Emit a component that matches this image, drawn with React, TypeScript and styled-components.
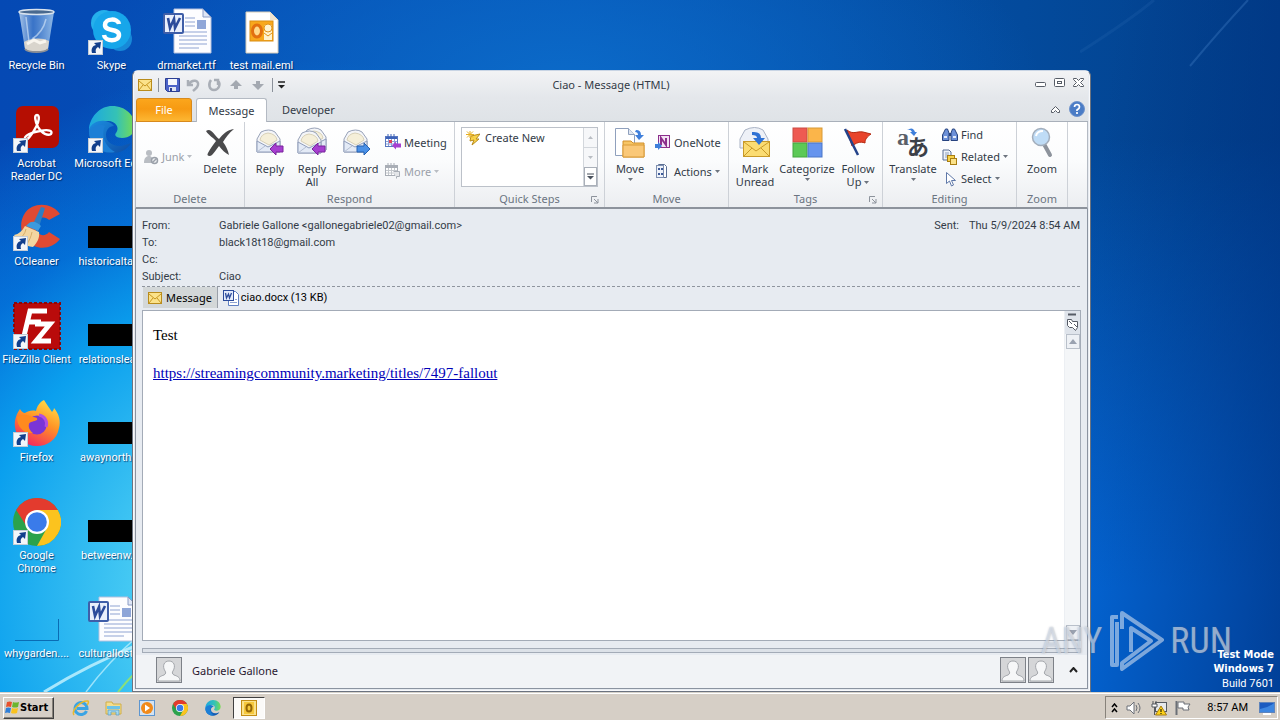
import React from "react";
import styled, { createGlobalStyle, css } from "styled-components";

const uiFont = 'Roboto, "DejaVu Sans Condensed", sans-serif';
const boldFont = '"DejaVu Sans Condensed", "DejaVu Sans", sans-serif';
const ribbonFont = '"Noto Sans", "Open Sans", sans-serif';

const GlobalStyle = createGlobalStyle`
  *, *::before, *::after { box-sizing: border-box; }
  body { margin: 0; font-family: ${uiFont}; font-size: 11px; line-height: 13px; overflow: hidden; }
  button { font: inherit; color: inherit; background: none; border: 0; padding: 0; margin: 0; }
  svg { display: block; flex: none; }
  p, dl, dd, h1, ul { margin: 0; padding: 0; }
`;

const Screen = styled.div`
  display: flex;
  flex-direction: column;
  height: 100vh;
`;

/* ---------- Desktop ---------- */

const Desktop = styled.main`
  position: relative;
  flex: 1;
  overflow: hidden;
  background:
    radial-gradient(ellipse 560px 540px at 300px 600px, #8be9fb 0%, #45c9f3 30%, #0ba0ee 58%, rgba(3, 130, 230, 0.6) 76%, rgba(2, 100, 208, 0) 100%),
    radial-gradient(ellipse 480px 200px at 560px 80px, rgba(12, 108, 202, 0.9) 0%, rgba(10, 100, 195, 0) 100%),
    linear-gradient(97deg, rgba(0, 50, 130, 0) 82%, rgba(0, 50, 130, 0.75) 100%),
    linear-gradient(180deg, rgba(4, 105, 218, 0) 0%, rgba(4, 105, 218, 0) 20%, rgba(4, 105, 218, 1) 85%),
    linear-gradient(90deg, #0549b4 0%, #0556b8 45%, #034a9c 80%, #02408a 100%);
`;

const Wallpaper = styled.svg`
  position: absolute;
  left: 0;
  bottom: 0;
`;

const TopGlow = styled.svg`
  position: absolute;
  right: 0;
  top: 0;
`;

const IconColumns = styled.div`
  position: relative;
  display: flex;
  margin-left: -1px;
`;

const IconColumn = styled.ul`
  width: 75px;
  list-style: none;
`;

const DesktopItem = styled.li`
  height: 98px;
  padding-top: 8px;
  display: flex;
  flex-direction: column;
  align-items: center;
  gap: 3px;
`;

const ItemLabel = styled.span`
  color: #fff;
  white-space: pre;
  text-align: center;
  text-shadow: 1px 1px 1px rgba(0, 30, 80, 0.7);
`;

const BuildInfo = styled.div`
  position: absolute;
  right: 6px;
  bottom: 0;
  color: #fff;
  text-align: right;
  line-height: 14px;
  strong, span { display: block; }
  strong { font-family: ${boldFont}; }
  span { line-height: 16px; }
`;

const Watermark = styled.div`
  position: absolute;
  right: 48px;
  bottom: 20px;
  display: flex;
  align-items: center;
  gap: 6px;
  color: rgba(225, 232, 242, 0.6);
  font: 400 36px/60px "Roboto Condensed", "Liberation Sans Narrow", Roboto, sans-serif;
  text-shadow: 0 0 2px rgba(90, 100, 120, 0.45);
`;

/* ---------- Message window ---------- */

const Window = styled.section`
  position: absolute;
  inset: 70px 189px 0 132px;
  display: flex;
  flex-direction: column;
  border: 1px solid #6b7380;
  border-top-color: #c8d4e4;
  border-radius: 6px 6px 0 0;
  background: #e7ebf1;
  padding: 0 2px 2px;
  box-shadow: inset 0 0 0 1px #f8f9fb;
  color: #333b47;
`;

const TitleBar = styled.header`
  display: grid;
  grid-template-columns: 1fr auto 1fr;
  align-items: center;
  height: 27px;
  padding: 0 4px 0 3px;
  background: linear-gradient(#f2f3f5, #e4e7eb);
  font-family: ${ribbonFont};
`;

const QuickAccess = styled.div`
  display: flex;
  align-items: center;
  gap: 6px;
`;

const QuickSeparator = styled.span<{ $tight?: boolean }>`
  width: 1px;
  height: 14px;
  background: #8b919a;
  margin-right: ${(p) => (p.$tight ? "-4px" : "0")};
`;

const WindowTitle = styled.h1`
  font-size: 11px;
  font-weight: 400;
  line-height: 16px;
`;

const WindowButtons = styled.div`
  display: flex;
  justify-content: flex-end;
  gap: 8px;
  padding-bottom: 4px;
`;

const TabStrip = styled.nav`
  display: flex;
  align-items: flex-end;
  height: 24px;
  border-bottom: 1px solid #a9b0ba;
  background: linear-gradient(#e4e7eb, #dfe3e7);
  font-family: ${ribbonFont};
  padding: 0 3px 0 1px;
`;

const RibbonTab = styled.button<{ $kind: "file" | "active" | "plain" }>`
  height: 23px;
  line-height: 22px;
  ${(p) =>
    p.$kind === "file" &&
    css`
      width: 56px;
      color: #fff;
      height: 24px;
      margin-bottom: -1px;
      border: 1px solid #d88a1c;
      border-radius: 3px 3px 0 0;
      background: linear-gradient(#fba61c, #f79a12 45%, #fdb733);
    `}
  ${(p) =>
    p.$kind === "active" &&
    css`
      width: 71px;
      height: 24px;
      margin: 0 0 -1px 4px;
      border: 1px solid #b4bac3;
      border-bottom: 0;
      border-radius: 3px 3px 0 0;
      background: #fff;
    `}
  ${(p) => p.$kind === "plain" && css`margin-left: 15px;`}
`;

const TabTools = styled.div`
  margin-left: auto;
  display: flex;
  align-items: center;
  gap: 9px;
  padding-bottom: 4px;
`;

const Ribbon = styled.div`
  display: flex;
  height: 87px;
  border-bottom: 2px solid #8d939c;
  border-left: 1px solid #b4bac3;
  border-right: 1px solid #b4bac3;
  background: linear-gradient(#ffffff, #fbfcfd 45%, #eceef1);
  font-family: ${ribbonFont};
`;

const RibbonGroup = styled.section<{ $width: number; $pad: number }>`
  display: flex;
  flex-direction: column;
  width: ${(p) => p.$width}px;
  border-right: 1px solid #cdd1d7;
  > div { padding-left: ${(p) => p.$pad}px; }
`;

const GroupBody = styled.div`
  display: flex;
  flex: 1;
`;

const GroupLabel = styled.footer`
  position: relative;
  height: 16px;
  line-height: 16px;
  text-align: center;
  color: #6b7481;
`;

const Launcher = styled.button`
  position: absolute;
  right: 5px;
  top: 5px;
`;

const BigButton = styled.button<{ $width: number }>`
  width: ${(p) => p.$width}px;
  padding-top: 5px;
  display: flex;
  flex-direction: column;
  align-items: center;
  gap: 3px;
`;

const BigLabel = styled.span`
  white-space: pre;
  text-align: center;
  svg { display: inline-block; vertical-align: 2px; margin-left: 3px; }
`;

const SmallColumn = styled.div<{ $indent?: number; $width?: number }>`
  display: flex;
  flex-direction: column;
  justify-content: center;
  margin-left: ${(p) => p.$indent || 0}px;
  ${(p) => p.$width && css`width: ${p.$width}px;`}
`;

const SmallButton = styled.button<{ $height: number }>`
  display: flex;
  align-items: center;
  gap: 3px;
  height: ${(p) => p.$height}px;
  &:disabled { color: #9aa0a9; }
`;

const Gallery = styled.div`
  display: flex;
  width: 137px;
  height: 60px;
  margin-top: 5px;
  border: 1px solid #bcc1c9;
  background: #fff;
`;

const GalleryItem = styled.button`
  display: flex;
  align-items: center;
  align-self: flex-start;
  flex: 1;
  gap: 5px;
  height: 19px;
  padding-left: 4px;
`;

const GalleryScroll = styled.div`
  display: grid;
  grid-template-rows: 1fr 1fr 1fr;
  width: 14px;
  border-left: 1px solid #d3d7dc;
  background: #f6f7f9;
`;

const GalleryStep = styled.button`
  display: grid;
  place-items: center;
  & + & { border-top: 1px solid #d3d7dc; }
  &:last-child { border: 1px solid #aab0b9; background: #fff; }
`;

/* ---------- Message header and body ---------- */

const MessagePane = styled.div`
  flex: 1;
  display: flex;
  flex-direction: column;
  border: solid #8b93a0;
  border-width: 0 1px 1px;
`;

const MessageHeader = styled.div`
  display: flex;
  justify-content: space-between;
  margin: 8px 7px 0 6px;
  height: 70px;
  border-bottom: 1px dashed #8f959e;
`;

const FieldList = styled.dl`
  display: grid;
  grid-template-columns: 77px auto;
  grid-auto-rows: 17px;
  line-height: 17px;
`;

const SentList = styled.dl`
  display: flex;
  gap: 10px;
  line-height: 17px;
`;

const AttachmentBar = styled.div`
  display: flex;
  height: 21px;
  margin: 0 7px 2px;
  color: #000;
`;

const AttachmentTab = styled.button<{ $active?: boolean }>`
  display: flex;
  align-items: center;
  gap: ${(p) => (p.$active ? 4 : 2)}px;
  padding: 0 5px;
  ${(p) =>
    p.$active &&
    css`
      font-family: ${ribbonFont};
      background: #d3d7d8;
      border-right: 1px solid #9aa0a9;
    `}
`;

const MessageFrame = styled.div`
  flex: 1;
  display: flex;
  margin: 0 6px;
  border: 1px solid #a3abb7;
  background: #fff;
`;

const MessageText = styled.article`
  flex: 1;
  padding: 15px 10px;
  font: 15px/19px "Liberation Serif", serif;
  color: #000;
  p + p { margin-top: 19px; }
  a { color: #0000b8; }
`;

const ScrollColumn = styled.div`
  display: flex;
  flex-direction: column;
  align-items: center;
  width: 16px;
  border-left: 1px solid #eceff3;
  background: #f4f6f8;
`;

const ScrollTools = styled.div`
  display: grid;
  place-items: center;
  width: 100%;
  height: 23px;
  background: #dfe4eb;
`;

const ScrollButton = styled.button<{ $end?: boolean }>`
  display: grid;
  place-items: center;
  width: 14px;
  height: 15px;
  border: 1px solid #b9c0ca;
  background: #eef1f5;
  ${(p) => p.$end && css`margin-top: auto;`}
`;

const Splitter = styled.div`
  height: 5px;
  margin: 7px 6px 2px;
  border: 1px solid #a3abb7;
  background: #dce1e8;
`;

const PeoplePane = styled.footer`
  display: flex;
  align-items: center;
  gap: 2px;
  height: 33px;
  padding: 0 9px 3px 20px;
  background: #f1f3f6;
  color: #2a1830;
`;

const PersonName = styled.span`
  margin: 0 auto 0 8px;
  font-family: ${ribbonFont};
`;

const Collapse = styled.button`
  margin-left: 13px;
`;

/* ---------- Taskbar ---------- */

const Taskbar = styled.footer`
  display: flex;
  align-items: center;
  height: 28px;
  padding: 2px 2px 0 3px;
  border-top: 1px solid #d6d2ca;
  box-shadow: inset 0 1px 0 #fff;
  background: #d6cfc6;
  color: #000;
`;

const StartButton = styled.button`
  display: flex;
  align-items: center;
  width: 51px;
  height: 22px;
  font-family: ${boldFont};
  font-weight: 700;
  border: 1px solid;
  border-color: #fff #404040 #404040 #fff;
  box-shadow: inset -1px -1px 0 #87827a;
`;

const TaskButton = styled.button<{ $active?: boolean }>`
  display: grid;
  place-items: center;
  width: ${(p) => (p.$active ? 32 : 33)}px;
  height: 22px;
  ${(p) =>
    p.$active &&
    css`
      margin-left: 4px;
      border: 1px solid;
      border-color: #404040 #fff #fff #404040;
      background: #fbfaf8;
    `}
`;

const TaskButtons = styled.div`
  display: flex;
  margin-left: 10px;
`;

const Tray = styled.div`
  display: flex;
  align-items: center;
  gap: 8px;
  height: 23px;
  margin-left: auto;
  padding: 0 2px 0 5px;
  border: 1px solid;
  border-color: #87827a #fff #fff #87827a;
`;

const Clock = styled.time`
  margin: 0 3px 0 8px;
`;

/* ---------- Icons ---------- */

const Caret = ({ color = "#6d747e" }: { color?: string }) => (
  <svg width="5" height="3" viewBox="0 0 5 3"><path d="M0 0h5L2.500 3z" fill={color} /></svg>
);

const Shortcut = () => (
  <g>
    <rect x="0.500" y="32.500" width="14" height="14" fill="#f3f6fa" stroke="#c3ccd6" />
    <path d="M4 45c-1-4 0-7 4-8l-2-2 7-1-1 7-2-2c-2 1-3 3-2 6z" fill="#123f8c" />
  </g>
);

const Big = ({ children }: { children: React.ReactNode }) => (
  <svg width="48" height="48" viewBox="0 0 48 48">{children}</svg>
);

const RecycleBin = () => (
  <Big>
    <defs>
      <linearGradient id="glass" x1="0" x2="1"><stop offset="0" stopColor="#c6dcf2" stopOpacity=".85" /><stop offset=".4" stopColor="#5c8fd4" stopOpacity=".6" /><stop offset="1" stopColor="#a9cdf0" stopOpacity=".85" /></linearGradient>
    </defs>
    <path d="M6 4l6 37c1 4 22 4 23 0l6-37z" fill="url(#glass)" />
    <path d="M11 34c6-4 18-5 25-1l-1 8c-1 4-22 4-23 0z" fill="#d9d5cd" />
    <path d="M14 36l7-4 6 3 6-2" stroke="#f8f5ee" strokeWidth="3" fill="none" />
    <path d="M13 9l3 25M33 11c-2 9-6 15-14 20" stroke="#dcebfa" strokeWidth="1.500" opacity=".6" fill="none" />
    <ellipse cx="23.500" cy="4" rx="17.500" ry="2.500" fill="#49698f" stroke="#d9e3ee" strokeWidth="1.500" />
    <path d="M12 41c3 4 20 4 23 0" stroke="#8b8f96" strokeWidth="2" fill="none" />
  </Big>
);

const Skype = () => (
  <Big>
    <circle cx="16" cy="15" r="13" fill="#25b0ec" /><circle cx="32" cy="31" r="12" fill="#1789d8" />
    <circle cx="24" cy="22" r="19" fill="#17a6ea" />
    <path d="M31 16c-1-6-14-6-14 1 0 7 14 3 14 10 0 7-14 7-15 0" fill="none" stroke="#fff" strokeWidth="4.500" />
    <Shortcut />
  </Big>
);

const WordBadge = () => (
  <g>
    <path d="M12 1h29l8 8v36H12z" fill="#fdfdff" stroke="#b5c1de" />
    <path d="M41 1v8h8z" fill="#dfe6f5" stroke="#8b9cc6" />
    <path d="M23 10h10M23 14h10M23 18h10M17 24h28M17 28h28M17 32h28M17 36h28M17 40h20" stroke="#8fa3d2" />
    <rect x="35" y="12" width="9" height="9" fill="#8fa6d8" />
    <rect x="2" y="6" width="19" height="19" rx="1" fill="#e9effc" stroke="#3f5ea8" strokeWidth="2" />
    <path d="M6 10l2 10 4-9 1 9 5-10" fill="none" stroke="#2c4b9b" strokeWidth="2.600" />
  </g>
);

const WordFile = () => <svg width="50" height="48" viewBox="0 0 50 48"><WordBadge /></svg>;

const MailFile = () => (
  <Big>
    <path d="M8 4h24l8 8v33H8z" fill="#fff" stroke="#d8cdb8" />
    <path d="M32 4v8h8z" fill="#eee4d0" />
    <rect x="12" y="13" width="23" height="20" fill="#f8a81c" stroke="#d98d12" />
    <rect x="26" y="17" width="8" height="15" fill="#fff3cf" /><path d="M26 25l4 3 4-3" stroke="#e0931a" fill="none" />
    <ellipse cx="19" cy="23" rx="4.500" ry="6" fill="#ffd98a" stroke="#e2700f" strokeWidth="3" />
    <circle cx="30" cy="20" r="4" fill="#fff3cf" stroke="#e0931a" />
  </Big>
);

const Acrobat = () => (
  <Big>
    <rect x="3" y="0" width="43" height="42" rx="7" fill="#b50e02" />
    <path d="M24 9c-3 0-2 6 1 12 4 7 10 9 13 7 2-3-2-5-11-3-9 1-16 5-15 8 1 3 7-4 11-12 3-5 4-12 1-12z" fill="none" stroke="#fff" strokeWidth="2.400" />
    <Shortcut />
  </Big>
);

const Edge = ({ size = 48, shortcut = true }: { size?: number; shortcut?: boolean }) => (
  <svg width={size} height={size} viewBox="0 0 48 48">
    <defs>
      <linearGradient id="edgeTop" x1="0" x2="1"><stop offset="0" stopColor="#1ba7e2" /><stop offset=".6" stopColor="#35c2b5" /><stop offset="1" stopColor="#76dc52" /></linearGradient>
      <linearGradient id="edgeLow" y1="0" y2="1" x1="0" x2="1"><stop offset="0" stopColor="#1b8de0" /><stop offset="1" stopColor="#0e4da6" /></linearGradient>
    </defs>
    <path d="M1 22C3 9 13 0 24 0c14 0 23 10 23 20 0 8-6 12-13 12-6 0-8-3-6-5 4-5 0-12-8-12C11 15 4 20 1 24z" fill="url(#edgeTop)" />
    <path d="M1 23c3-6 9-9 16-8 4 1 7 2 9 5-5 0-8 4-8 9 0 8 9 13 19 10 3-1 5-2 6-2C39 44 32 47 24 47 10 47 0 36 1 23z" fill="url(#edgeLow)" />
    <path d="M17 20c-4 8-1 20 10 26-13 3-25-6-26-20 3-6 10-9 16-6z" fill="#1c7fd6" />
    {shortcut && <Shortcut />}
  </svg>
);

const CCleaner = () => (
  <Big>
    <path d="M47 10C38-2 20-2 12 9c-8 12-3 28 9 33 9 4 20 1 26-7l-11-7c-3 4-8 4-11 1-5-5-3-13 3-15 3-1 6 0 8 2z" fill="#e04a32" />
    <path d="M28 3l4 1-6 19-6-3z" fill="#2d7fc4" />
    <path d="M15 20c4-4 9-2 13 2l-3 5-12-5z" fill="#3d9ade" />
    <path d="M12 22l14 6c1 6-2 11-6 15-8-1-15-5-19-12 5-1 8-4 11-9z" fill="#f3d6a0" />
    <path d="M13 25c-1 5-4 8-7 10M19 28c-1 5-3 9-5 12" stroke="#d6ad68" fill="none" />
    <Shortcut />
  </Big>
);

const FileZilla = () => (
  <Big>
    <rect x="1" y="1" width="46" height="46" fill="#b90b0b" stroke="#8d0606" strokeWidth="2" strokeDasharray="3 2" />
    <path d="M11 34l6-25h17M14 20h14" stroke="#fff" strokeWidth="5" fill="none" />
    <path d="M22 22h15L23 39h15" stroke="#fff" strokeWidth="5" fill="none" />
    <Shortcut />
  </Big>
);

const Firefox = () => (
  <Big>
    <defs><linearGradient id="fox" x1=".8" y1="0" x2=".3" y2="1"><stop offset="0" stopColor="#ffe14a" /><stop offset=".45" stopColor="#ff9526" /><stop offset="1" stopColor="#f4255f" /></linearGradient></defs>
    <path d="M7 9c1 2 3 4 5 4 3-2 7-3 11-2 1-5 4-9 8-11 3 5 6 9 8 12 1-1 2-3 2-4 5 6 7 13 5 20-2 12-12 18-22 18C12 46 3 38 2 27 1 20 4 13 7 9z" fill="url(#fox)" />
    <circle cx="24" cy="25" r="9.500" fill="#7a35d6" />
    <path d="M4 17c6-4 12-2 15 0 4 0 6 1 5 3-3 2-7 1-8 4-1 3 1 7 4 9-9 1-16-6-16-16z" fill="#ff8a1e" />
    <path d="M26 15c6 1 9 7 7 12" stroke="#b34fe0" strokeWidth="3" fill="none" />
    <Shortcut />
  </Big>
);

const ChromeMark = () => (
  <g>
    <circle cx="24" cy="24" r="24" fill="#2ba24c" />
    <path d="M3.200 12A24 24 0 0 1 44.800 12H24L14 29z" fill="#e33b2e" />
    <path d="M24 12h20.800A24 24 0 0 1 24 48l10-18z" fill="#fcc31e" />
    <circle cx="24" cy="24" r="12" fill="#fff" /><circle cx="24" cy="24" r="9.800" fill="#3a7bea" />
  </g>
);

const Chrome = () => <Big><ChromeMark /><Shortcut /></Big>;

const BlackPicture = () => <Big><rect x="0" y="22" width="48" height="22" fill="#000" /></Big>;
const EmptyPicture = () => <Big><path d="M2 44.500h43.500V23" fill="none" stroke="#0a6cb4" /></Big>;

const SmallEnvelope = () => (
  <svg width="14" height="12" viewBox="0 0 14 12">
    <rect x=".5" y=".5" width="13" height="11" fill="#fbe28a" stroke="#b98c1c" />
    <path d="M1 2l6 5 6-5M1 11l4-5M13 11L9 6" stroke="#c7961f" fill="none" />
  </svg>
);

const Floppy = () => (
  <svg width="15" height="14" viewBox="0 0 15 14">
    <path d="M.5.5h14v13h-12l-2-2z" fill="#4b62c8" stroke="#2c3f92" />
    <rect x="3" y="1" width="9" height="6" fill="#f4f6fc" /><rect x="4" y="9" width="7" height="4" fill="#dfe4f2" /><rect x="5" y="10" width="2" height="3" fill="#2c3f92" />
  </svg>
);

const Undo = () => (
  <svg width="15" height="14" viewBox="0 0 15 14"><path d="M2 2v5h5M3 6c3-5 10-4 9 1-.500 3-3 4-5 6" fill="none" stroke="#a9aeb6" strokeWidth="2.500" /></svg>
);
const Redo = () => (
  <svg width="15" height="14" viewBox="0 0 15 14"><path d="M4 2C1 6 2 12 7 12s7-6 4-9M11 7V2H7" fill="none" stroke="#a9aeb6" strokeWidth="2.500" /></svg>
);
const Diamond = ({ flip }: { flip?: boolean }) => (
  <svg width="16" height="12" viewBox="0 0 16 12">
    <path d={flip ? "M8 11L2 5h4V2h4v3h4z" : "M8 1L2 7h4v3h4V7h4z"} fill="#a4a9b1" />
  </svg>
);

const EnvelopeBody = ({ x = 0, y = 0 }: { x?: number; y?: number }) => (
  <g transform={`translate(${x} ${y})`}>
    <path d="M1 10L5 3q8-4 14 0l5 7v13H1z" fill="#f4f5f8" stroke="#98a2b8" />
    <path d="M4 11q1-6 8-7 8 1 9 7l-8 5z" fill="#f5efd9" stroke="#d8d1b8" />
    <path d="M1 12l11 6 12-6v11H1z" fill="#e3eaf6" stroke="#8f9dba" />
    <path d="M1 23l8-6M24 23l-8-6" stroke="#b4bed2" />
  </g>
);
const PurpleArrow = ({ x = 0, y = 0 }: { x?: number; y?: number }) => (
  <path transform={`translate(${x} ${y})`} d="M0 6l6-6v3h7v6H6v3z" fill="#a63fd0" stroke="#7a259d" />
);
const ReplyIcon = () => <svg width="32" height="32" viewBox="0 0 32 32"><EnvelopeBody x={2} y={2} /><PurpleArrow x={16} y={16} /></svg>;
const ReplyAllIcon = () => <svg width="32" height="32" viewBox="0 0 32 32"><EnvelopeBody x={6} y={0} /><EnvelopeBody x={1} y={3} /><PurpleArrow x={16} y={16} /></svg>;
const ForwardIcon = () => (
  <svg width="32" height="32" viewBox="0 0 32 32"><EnvelopeBody x={2} y={2} /><path d="M29 22l-6-6v3h-7v6h7v3z" fill="#4a90e6" stroke="#2560b0" /></svg>
);
const DeleteIcon = () => (
  <svg width="32" height="32" viewBox="0 0 32 32">
    <path d="M2 4c5-4 8 4 13 8C19 7 23 3 30 2c-5 4-8 8-11 13 3 4 5 8 6 13-4-2-7-5-10-9-3 4-5 7-7 9-2 2-6 1-4-2 2-4 5-8 8-12C9 10 5 9 2 4z" fill="#4a4a4c" />
  </svg>
);
const JunkIcon = () => (
  <svg width="16" height="16" viewBox="0 0 16 16"><circle cx="6" cy="4" r="3" fill="#b9bdc3" /><path d="M1 14c0-5 2-7 5-7s4 2 4 7z" fill="#b9bdc3" /><circle cx="11.500" cy="11.500" r="3" fill="#eceef0" stroke="#9aa0a9" strokeWidth="1.500" /><path d="M9.500 13.500l4-4" stroke="#9aa0a9" strokeWidth="1.500" /></svg>
);
const CalendarIcon = ({ muted }: { muted?: boolean }) => (
  <svg width="16" height="16" viewBox="0 0 16 16">
    <rect x=".5" y="2.500" width="12" height="10" fill="#fff" stroke={muted ? "#a9aeb6" : "#5a78c0"} />
    <path d="M1 4h11" stroke={muted ? "#a9aeb6" : "#3d62b8"} strokeWidth="2" /><path d="M3 0v4M6 0v4M9 0v4" stroke={muted ? "#a9aeb6" : "#3d62b8"} />
    <path d="M3.500 5v7M6.500 5v7M9.500 5v7M1 7.500h11M1 10h11" stroke={muted ? "#c3c7cc" : "#8ba2d8"} />
    {muted ? <path d="M8.500 8.500h6v5h-3v2" fill="#e4e6e9" stroke="#a9aeb6" /> : <><rect x="4" y="6" width="3" height="3" fill="#e0425a" /><path d="M7 11.500l4-4v2h5v4h-5v2z" fill="#a63fd0" /></>}
  </svg>
);
const QuickIcon = () => (
  <svg width="14" height="16" viewBox="0 0 14 16"><path d="M5 6l9-2-4 5h3l-7 6 2-5-4 1z" fill="#f9d34a" stroke="#b98c1c" /><path d="M4 1v7M0 4.500h8M1 1.500l6 6M7 1.500l-6 6" stroke="#e8b021" /></svg>
);
const MoveIcon = () => (
  <svg width="32" height="32" viewBox="0 0 32 32">
    <path d="M1.500 1.500h13l6 6v21h-19z" fill="#fff" stroke="#8fa0bd" /><path d="M14.500 1.500v6h6" fill="#dfe6f2" stroke="#8fa0bd" />
    <path d="M9 14h8l2 2h11v14H9z" fill="#f7c565" stroke="#d18f2a" /><path d="M9 18h21v12H9z" fill="#fac878" stroke="#d99a36" />
    <path d="M22 3q5 0 5 5h3l-5 5-4-5h3q0-3-3-3z" fill="#3f7fdb" />
  </svg>
);
const OneNoteIcon = () => (
  <svg width="16" height="16" viewBox="0 0 16 16"><rect x="3.500" y="1.500" width="11" height="12" fill="#f3e3f3" stroke="#8c2f8c" /><path d="M6 11V4l5 7V4" stroke="#8c2f8c" strokeWidth="2" fill="none" /><path d="M0 10h3V8l4 4-4 4v-2H0z" fill="#3f7fdb" /></svg>
);
const ActionsIcon = () => (
  <svg width="16" height="16" viewBox="0 0 16 16"><path d="M3.500 1.500h6l2 2v11h-8z" fill="#fff" stroke="#5b6f94" /><rect x="1.500" y="2.500" width="7" height="12" fill="#eef2f9" stroke="#7f90b0" /><path d="M3 6h2M3 11h2M6 6h2M6 11h2" stroke="#3d5a98" strokeWidth="2" /></svg>
);
const UnreadIcon = () => (
  <svg width="32" height="32" viewBox="0 0 32 32">
    <path d="M1 12L6 3q10-5 18 0l5 9v9H1z" fill="#eef1f7" stroke="#a9b2c4" />
    <rect x="4.500" y="14.500" width="26" height="15" fill="#fbdc72" stroke="#c99a28" /><path d="M5 15l12 9 13-9M5 29l8-8M30 29l-8-8" stroke="#c99a28" fill="none" />
    <path d="M13 5q9-1 9 6h4l-6 7-6-7h4q0-3-5-3z" fill="#2f72d4" />
  </svg>
);
const CategorizeIcon = () => (
  <svg width="32" height="32" viewBox="0 0 32 32"><rect x="2" y="1" width="14" height="14" fill="#ee5a52" stroke="#cc4a42" /><rect x="17" y="1" width="14" height="14" fill="#fbb54a" stroke="#d89a36" /><rect x="2" y="16" width="14" height="14" fill="#5cc956" stroke="#45a440" /><rect x="17" y="16" width="14" height="14" fill="#6694ee" stroke="#4a76c8" /></svg>
);
const FlagIcon = () => (
  <svg width="32" height="32" viewBox="0 0 32 32"><path d="M5 3c6 5 10 1 16 2l8 2c-4 3-6 5-6 9-5-2-9 0-13 3z" fill="#e8432a" stroke="#b42a12" /><path d="M3 2l13 26" stroke="#24438a" strokeWidth="2.500" /></svg>
);
const TranslateGlyphs = styled.svg`
  font-family: "Liberation Serif", "Noto Sans CJK JP", serif;
  font-weight: 700;
`;
const TranslateIcon = () => (
  <TranslateGlyphs width="32" height="32" viewBox="0 0 32 32"><text x="0" y="18" fontSize="24" fill="#5a5f68">a</text><text x="10" y="28" fontSize="22" fill="#3c4048">あ</text><path d="M10 3q6-4 8 2h2l-3 4-4-4h2q-1-3-5-2z" fill="#3f7fdb" /></TranslateGlyphs>
);
const FindIcon = () => (
  <svg width="16" height="16" viewBox="0 0 16 16"><path d="M.5 13.500V8l3-6h2l1.500 4v7.500zM9 13.500V6l1.500-4h2l3 6v5.500z" fill="#6c90d8" stroke="#27437f" /><path d="M7 6h2v3H7z" fill="#27437f" /><path d="M2 10h3M11 10h3" stroke="#e3ecfb" strokeWidth="2" /></svg>
);
const RelatedIcon = () => (
  <svg width="16" height="16" viewBox="0 0 16 16"><path d="M1 1h6l2 2v8H1z" fill="#eef2f9" stroke="#5b6f94" /><path d="M3 4h4M3 6h4M3 8h4" stroke="#8fa0bd" /><rect x="5.500" y="6.500" width="7" height="6" fill="#f9d34a" stroke="#a87d12" /><rect x="8.500" y="9.500" width="6" height="6" fill="#fbe28a" stroke="#a87d12" /></svg>
);
const SelectIcon = () => (
  <svg width="16" height="16" viewBox="0 0 16 16"><path d="M4.500 1.500v11l3-2.500 2 5 2-1-2-4.500h4z" fill="#fff" stroke="#5f78a8" /></svg>
);
const ZoomIcon = () => (
  <svg width="32" height="32" viewBox="0 0 32 32"><path d="M18 17l6 11" stroke="#8d939c" strokeWidth="4" strokeLinecap="round" /><circle cx="15" cy="10" r="8.500" fill="#bfdcf6" stroke="#a3aebc" strokeWidth="1.500" /><path d="M10 9q1-5 7-5" stroke="#fff" strokeWidth="2" fill="none" /></svg>
);
const WordTiny = () => (
  <svg width="16" height="16" viewBox="0 0 16 16"><path d="M5.500 1.500h7l3 3v11h-10z" fill="#fff" stroke="#5f7fc2" /><path d="M12 9.500h2M7 12.500h7" stroke="#8fa3d2" /><rect x=".5" y=".5" width="10" height="10" fill="#e3ebfb" stroke="#2c4b9b" /><path d="M2.500 3l1 5 2-4 1 4 2-5" stroke="#2c4b9b" strokeWidth="1.300" fill="none" /></svg>
);
const LauncherIcon = () => (
  <svg width="8" height="8" viewBox="0 0 8 8"><path d="M.5 6V.500H6M3 3l4 4M7 3v4H3" fill="none" stroke="#8d939c" /></svg>
);
const Avatar = () => (
  <svg width="26" height="26" viewBox="0 0 26 26">
    <rect x=".5" y=".5" width="25" height="25" fill="#d5d6d8" stroke="#7d8188" />
    <path d="M2 24c0-4 3-5 6-6 2-1 2-3 1-4-3-5-1-10 4-10s7 5 4 10c-1 1-1 3 1 4 3 1 6 2 6 6z" fill="#f6f7f8" stroke="#a3a6ab" />
  </svg>
);
const WindowsFlag = () => (
  <svg width="16" height="16" viewBox="0 0 16 16"><path d="M3 2q3-1 5 0L7 7q-3-1-5 0z" fill="#e8502a" /><path d="M9 2q2 1 6 0l-1 5q-3 1-6 0z" fill="#6cb52d" /><path d="M2 8q2-1 5 0l-1 5q-3-1-5 0z" fill="#2f7fd8" /><path d="M8 8q3 1 6 0l-1 5q-3 1-6 0z" fill="#f9c21e" /></svg>
);
const ExplorerE = () => (
  <svg width="18" height="18" viewBox="0 0 18 18"><path d="M14.500 12A6 6 0 1 1 15 9.500H5" fill="none" stroke="#3aa4e4" strokeWidth="3" /><path d="M2 16C-1 12 9 1 16 2c1 1 0 3-1 4" stroke="#e8b92c" strokeWidth="1.500" fill="none" /></svg>
);
const FolderTask = () => (
  <svg width="17" height="16" viewBox="0 0 17 16"><path d="M1 2h6l1 2h8v10H1z" fill="#f4dd8c" stroke="#cfae48" /><rect x="2" y="6" width="13" height="3" fill="#6cc3e8" /><path d="M3 15v-5h11v5h-3v-3H6v3z" fill="#a3d8ee" stroke="#5a9cc0" strokeWidth=".7" /></svg>
);
const MediaPlayer = () => (
  <svg width="16" height="16" viewBox="0 0 16 16"><rect x=".5" y=".5" width="15" height="15" fill="#d4e3f2" stroke="#5d96d0" /><circle cx="8" cy="8" r="6" fill="#f18a1a" /><path d="M6 4.500l5 3.500-5 3.500z" fill="#fff" /></svg>
);
const OutlookTask = () => (
  <svg width="16" height="16" viewBox="0 0 16 16"><rect x=".5" y=".5" width="15" height="15" fill="#fbe28a" stroke="#c38d14" /><rect x="3" y="2" width="10" height="12" fill="#f6c83c" /><ellipse cx="8" cy="8" rx="2.500" ry="3.500" fill="none" stroke="#946606" strokeWidth="2" /></svg>
);

/* ---------- Parts ---------- */

const LargeCommand: React.FC<{ icon: React.ReactNode; label: React.ReactNode; width: number; caret?: boolean }> = ({ icon, label, width, caret }) => (
  <BigButton $width={width}>
    {icon}
    <BigLabel>{label}</BigLabel>
    {caret && <Caret />}
  </BigButton>
);

const SmallCommand: React.FC<{ icon: React.ReactNode; label: string; height: number; caret?: boolean; disabled?: boolean }> = ({ icon, label, height, caret, disabled }) => (
  <SmallButton $height={height} disabled={disabled}>
    {icon}
    <span>{label}</span>
    {caret && <Caret color={disabled ? "#b9bdc3" : undefined} />}
  </SmallButton>
);

const Group: React.FC<{ label: string; width: number; pad: number; launcher?: boolean; children: React.ReactNode }> = ({ label, width, pad, launcher, children }) => (
  <RibbonGroup $width={width} $pad={pad}>
    <GroupBody>{children}</GroupBody>
    <GroupLabel>
      {label}
      {launcher && <Launcher aria-label={label + " options"}><LauncherIcon /></Launcher>}
    </GroupLabel>
  </RibbonGroup>
);

const columns: { label: string; icon: React.ReactNode }[][] = [
  [
    { label: "Recycle Bin", icon: <RecycleBin /> },
    { label: "Acrobat\nReader DC", icon: <Acrobat /> },
    { label: "CCleaner", icon: <CCleaner /> },
    { label: "FileZilla Client", icon: <FileZilla /> },
    { label: "Firefox", icon: <Firefox /> },
    { label: "Google\nChrome", icon: <Chrome /> },
    { label: "whygarden....", icon: <EmptyPicture /> },
  ],
  [
    { label: "Skype", icon: <Skype /> },
    { label: "Microsoft Edge", icon: <Edge /> },
    { label: "historicaltal...", icon: <BlackPicture /> },
    { label: "relationslea...", icon: <BlackPicture /> },
    { label: "awaynorth....", icon: <BlackPicture /> },
    { label: "betweenw....", icon: <BlackPicture /> },
    { label: "culturallost....", icon: <WordFile /> },
  ],
  [{ label: "drmarket.rtf", icon: <WordFile /> }],
  [{ label: "test mail.eml", icon: <MailFile /> }],
];

export default function App() {
  return (
    <Screen>
      <GlobalStyle />
      <Desktop>
        <Wallpaper width="140" height="120" viewBox="0 0 140 120" fill="none">
          <path d="M44 120Q90 92 140 72" stroke="#c8f4ff" strokeWidth="3" opacity=".8" />
          <path d="M86 120Q108 90 140 62" stroke="#c8f4ff" strokeWidth="1.500" opacity=".7" />
          <path d="M118 120q8-10 16-18" stroke="#8be07a" strokeWidth="2" />
        </Wallpaper>
        <TopGlow width="200" height="120" viewBox="0 0 200 120" fill="none" stroke="#4f8ad0">
          <path d="M110 66Q140 30 168 0" opacity=".3" strokeWidth="2" /><path d="M0 52Q50 20 74 0" opacity=".12" strokeWidth="3" />
        </TopGlow>
        <IconColumns>
          {columns.map((items, i) => (
            <IconColumn key={i}>
              {items.map((item) => (
                <DesktopItem key={item.label}>
                  {item.icon}
                  <ItemLabel>{item.label}</ItemLabel>
                </DesktopItem>
              ))}
            </IconColumn>
          ))}
        </IconColumns>

        <Window>
          <TitleBar>
            <QuickAccess>
              <SmallEnvelope />
              <QuickSeparator />
              <button aria-label="Save"><Floppy /></button>
              <button aria-label="Undo"><Undo /></button>
              <button aria-label="Redo"><Redo /></button>
              <button aria-label="Previous item"><Diamond /></button>
              <button aria-label="Next item"><Diamond flip /></button>
              <QuickSeparator $tight />
              <button aria-label="Customize toolbar">
                <svg width="11" height="8" viewBox="0 0 11 8"><path d="M3 1h7" stroke="#222" strokeWidth="1.500" /><path d="M3 4h7L6.500 7.500z" fill="#222" /></svg>
              </button>
            </QuickAccess>
            <WindowTitle>Ciao - Message (HTML)</WindowTitle>
            <WindowButtons>
              <button aria-label="Minimize"><svg width="11" height="11" viewBox="0 0 11 11"><rect x=".5" y="5.500" width="10" height="4" rx="1" fill="#fff" stroke="#565c66" /></svg></button>
              <button aria-label="Maximize"><svg width="11" height="11" viewBox="0 0 11 11"><rect x=".5" y="1.500" width="10" height="8" rx="1" fill="#fff" stroke="#565c66" /><rect x="3.500" y="4.500" width="4" height="2" fill="none" stroke="#565c66" /></svg></button>
              <button aria-label="Close"><svg width="11" height="11" viewBox="0 0 11 11"><path d="M.5 1.500h3l2 2 2-2h3v1l-3 3 3 3v1h-3l-2-2-2 2h-3v-1l3-3-3-3z" fill="#fff" stroke="#565c66" /></svg></button>
            </WindowButtons>
          </TitleBar>

          <TabStrip>
            <RibbonTab $kind="file">File</RibbonTab>
            <RibbonTab $kind="active">Message</RibbonTab>
            <RibbonTab $kind="plain">Developer</RibbonTab>
            <TabTools>
              <button aria-label="Minimize ribbon"><svg width="9" height="7" viewBox="0 0 9 7"><path d="M.5 4.500l4-4 4 4v2h-2l-2-2-2 2h-2z" fill="#fff" stroke="#565c66" /></svg></button>
              <button aria-label="Help"><svg width="16" height="16" viewBox="0 0 16 16"><circle cx="8" cy="8" r="7.500" fill="#4a7cc6" stroke="#6f93cc" /><path d="M5.500 6q0-2.500 2.500-2.500T10.500 6q0 1.500-2.500 3v1M8 11v2" stroke="#fff" strokeWidth="1.700" fill="none" /></svg></button>
            </TabTools>
          </TabStrip>

          <Ribbon>
            <Group label="Delete" width={109} pad={7}>
              <SmallColumn $width={56}>
                <SmallCommand icon={<JunkIcon />} label="Junk" height={22} caret disabled />
              </SmallColumn>
              <LargeCommand icon={<DeleteIcon />} label="Delete" width={42} />
            </Group>
            <Group label="Respond" width={210} pad={4}>
              <LargeCommand icon={<ReplyIcon />} label="Reply" width={42} />
              <LargeCommand icon={<ReplyAllIcon />} label={"Reply\nAll"} width={42} />
              <LargeCommand icon={<ForwardIcon />} label="Forward" width={48} />
              <SmallColumn $indent={4}>
                <SmallCommand icon={<CalendarIcon />} label="Meeting" height={29} />
                <SmallCommand icon={<CalendarIcon muted />} label="More" height={29} caret disabled />
              </SmallColumn>
            </Group>
            <Group label="Quick Steps" width={150} pad={6} launcher>
              <Gallery>
                <GalleryItem><QuickIcon />Create New</GalleryItem>
                <GalleryScroll>
                  <GalleryStep aria-label="Row up"><svg width="5" height="3" viewBox="0 0 5 3"><path d="M0 3h5L2.500 0z" fill="#b9bdc3" /></svg></GalleryStep>
                  <GalleryStep aria-label="Row down"><Caret color="#b9bdc3" /></GalleryStep>
                  <GalleryStep aria-label="More quick steps"><svg width="7" height="7" viewBox="0 0 7 7"><path d="M0 1h7" stroke="#4b525d" /><path d="M0 3h7L3.500 6.500z" fill="#4b525d" /></svg></GalleryStep>
                </GalleryScroll>
              </Gallery>
            </Group>
            <Group label="Move" width={124} pad={3}>
              <LargeCommand icon={<MoveIcon />} label="Move" width={44} caret />
              <SmallColumn $indent={3}>
                <SmallCommand icon={<OneNoteIcon />} label="OneNote" height={29} />
                <SmallCommand icon={<ActionsIcon />} label="Actions" height={29} caret />
              </SmallColumn>
            </Group>
            <Group label="Tags" width={154} pad={2} launcher>
              <LargeCommand icon={<UnreadIcon />} label={"Mark\nUnread"} width={48} />
              <LargeCommand icon={<CategorizeIcon />} label="Categorize" width={56} caret />
              <LargeCommand icon={<FlagIcon />} label={<>{"Follow\nUp"}<Caret /></>} width={46} />
            </Group>
            <Group label="Editing" width={134} pad={2}>
              <LargeCommand icon={<TranslateIcon />} label="Translate" width={56} caret />
              <SmallColumn $indent={1}>
                <SmallCommand icon={<FindIcon />} label="Find" height={22} />
                <SmallCommand icon={<RelatedIcon />} label="Related" height={22} caret />
                <SmallCommand icon={<SelectIcon />} label="Select" height={22} caret />
              </SmallColumn>
            </Group>
            <Group label="Zoom" width={51} pad={4}>
              <LargeCommand icon={<ZoomIcon />} label="Zoom" width={42} />
            </Group>
          </Ribbon>

          <MessagePane>
            <MessageHeader>
              <FieldList>
                <dt>From:</dt><dd>Gabriele Gallone &lt;gallonegabriele02@gmail.com&gt;</dd>
                <dt>To:</dt><dd>black18t18@gmail.com</dd>
                <dt>Cc:</dt><dd />
                <dt>Subject:</dt><dd>Ciao</dd>
              </FieldList>
              <SentList><dt>Sent:</dt><dd>Thu 5/9/2024 8:54 AM</dd></SentList>
            </MessageHeader>
            <AttachmentBar>
              <AttachmentTab $active><SmallEnvelope />Message</AttachmentTab>
              <AttachmentTab><WordTiny />ciao.docx (13 KB)</AttachmentTab>
            </AttachmentBar>
            <MessageFrame>
              <MessageText>
                <p>Test</p>
                <p><a href="https://streamingcommunity.marketing/titles/7497-fallout">https://streamingcommunity.marketing/titles/7497-fallout</a></p>
              </MessageText>
              <ScrollColumn>
                <ScrollTools>
                  <svg width="13" height="19" viewBox="0 0 13 19"><path d="M2 1.500h8" stroke="#565c66" strokeWidth="2" /><path d="M1.500 6.500h4l1 2h5v6l-2 3-3-3h-3l-2-2zM3 8l3 3M8 11l3 3" fill="#fff" stroke="#565c66" /></svg>
                </ScrollTools>
                <ScrollButton aria-label="Scroll up"><svg width="8" height="5" viewBox="0 0 8 5"><path d="M0 5h8L4 0z" fill="#9aa2b0" /></svg></ScrollButton>
                <ScrollButton $end aria-label="Scroll down"><svg width="8" height="5" viewBox="0 0 8 5"><path d="M0 0h8L4 5z" fill="#9aa2b0" /></svg></ScrollButton>
              </ScrollColumn>
            </MessageFrame>
            <Splitter />
            <PeoplePane>
              <Avatar />
              <PersonName>Gabriele Gallone</PersonName>
              <Avatar />
              <Avatar />
              <Collapse aria-label="Expand people pane"><svg width="9" height="6" viewBox="0 0 9 6"><path d="M1 5l3.500-4L8 5" fill="none" stroke="#222" strokeWidth="2" /></svg></Collapse>
            </PeoplePane>
          </MessagePane>
        </Window>

        <BuildInfo>
          <strong>Test Mode</strong>
          <strong>Windows 7</strong>
          <span>Build 7601</span>
        </BuildInfo>
        <Watermark>
          <span>ANY</span>
          <svg width="56" height="62" viewBox="0 0 56 62" fill="none" stroke="#dfe8f4" strokeWidth="4" strokeLinejoin="round" opacity=".55">
            <path d="M10 7H4v48h5V12" /><path d="M14 19V3l40 27-40 29v-6l29-22-20-13v24" />
          </svg>
          <span>RUN</span>
        </Watermark>
      </Desktop>

      <Taskbar>
        <StartButton><WindowsFlag />Start</StartButton>
        <TaskButtons>
          <TaskButton aria-label="Internet Explorer"><ExplorerE /></TaskButton>
          <TaskButton aria-label="File Explorer"><FolderTask /></TaskButton>
          <TaskButton aria-label="Media Player"><MediaPlayer /></TaskButton>
          <TaskButton aria-label="Chrome"><svg width="16" height="16" viewBox="0 0 48 48"><ChromeMark /></svg></TaskButton>
          <TaskButton aria-label="Edge"><Edge size={16} shortcut={false} /></TaskButton>
          <TaskButton $active aria-label="Outlook"><OutlookTask /></TaskButton>
        </TaskButtons>
        <Tray>
          <svg width="7" height="10" viewBox="0 0 7 10" fill="none" stroke="#000" strokeWidth="1.500"><path d="M1 4l2.500-3L6 4M1 9l2.500-3L6 9" /></svg>
          <svg width="17" height="16" viewBox="0 0 17 16"><path d="M1 6h3l4-4v12l-4-4H1z" fill="#fff" stroke="#6b6f76" /><path d="M10 5q2 3 0 6M12 3q4 5 0 10" fill="none" stroke="#6b6f76" /></svg>
          <svg width="16" height="16" viewBox="0 0 16 16"><rect x="4.500" y="2.500" width="11" height="9" fill="#e6e8ea" stroke="#55595f" /><path d="M2 1v3M5 1v3M1 4h5v3H1zM3.500 7v8" fill="#fff" stroke="#55595f" /><path d="M10 6l5.500 9h-11z" fill="#fcd116" stroke="#a87d12" /><path d="M10 9v3M10 13v1" stroke="#000" /></svg>
          <svg width="16" height="16" viewBox="0 0 16 16"><path d="M1.500 1v14" stroke="#6b6f76" strokeWidth="2" /><path d="M3 2h6v2h6l-2 3 1 3H8V8H3z" fill="#fff" stroke="#6b6f76" /></svg>
          <Clock>8:57 AM</Clock>
          <svg width="16" height="14" viewBox="0 0 16 14"><rect x=".5" y="1.500" width="15" height="10" fill="#1b5bc0" stroke="#5f84bb" /><path d="M1 8q8-1 14-6v9H1z" fill="#3d86e0" /><path d="M4 13h8" stroke="#fff" strokeWidth="2" /></svg>
        </Tray>
      </Taskbar>
    </Screen>
  );
}
